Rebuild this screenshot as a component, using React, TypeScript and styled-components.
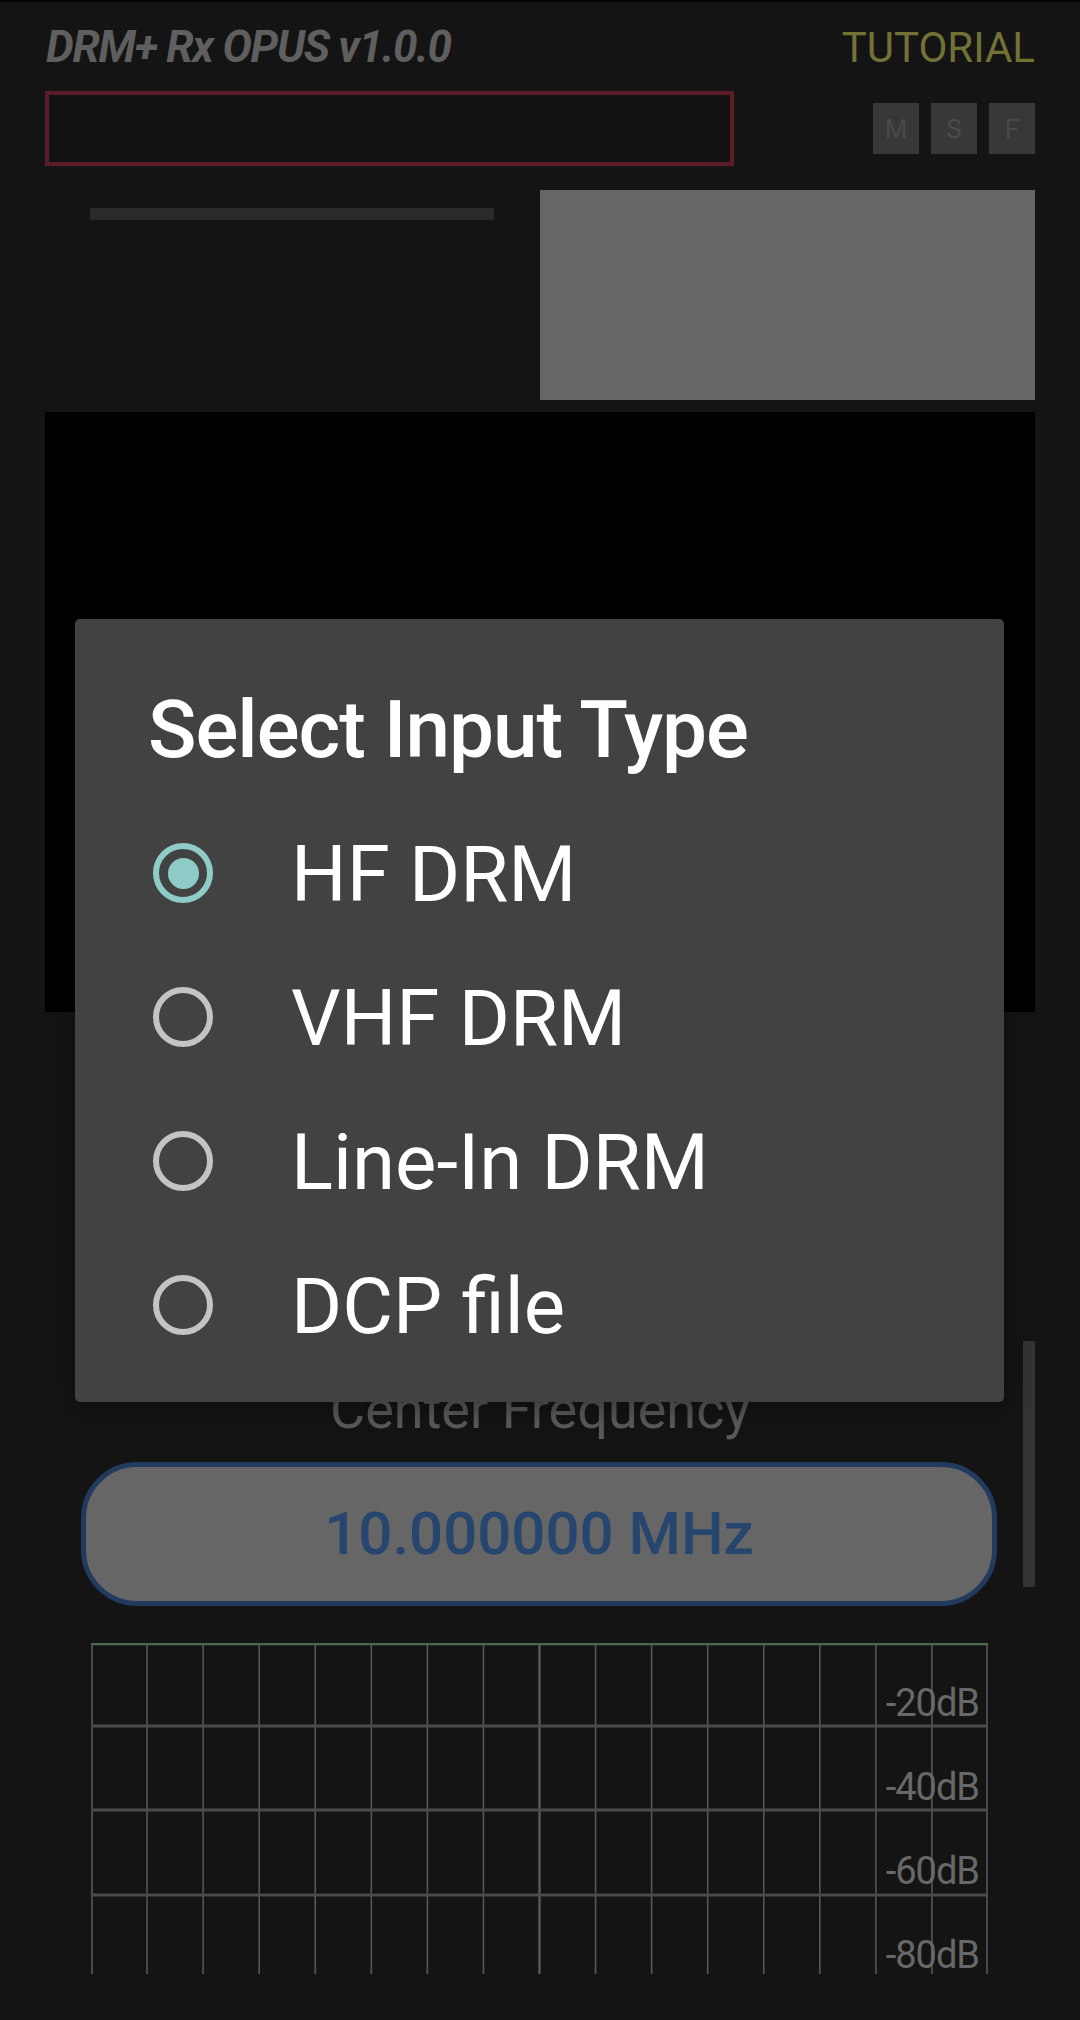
import React from "react";
import styled, { createGlobalStyle } from "styled-components";

const GlobalStyle = createGlobalStyle`
  html, body {
    margin: 0;
    padding: 0;
    background: #141414;
  }
  body {
    font-family: Roboto, "Noto Sans", "Liberation Sans", sans-serif;
  }
  * { box-sizing: border-box; }
`;

const Page = styled.div`
  position: relative;
  width: 1080px;
  height: 2020px;
  overflow: hidden;
  background: #141414;
  border-top: 2px solid #050505;
  padding: 0 45px;
  display: flex;
  flex-direction: column;
`;

const Header = styled.header`
  display: flex;
  justify-content: space-between;
  align-items: baseline;
  margin-top: 19px;
  height: 52px;
`;

const AppTitle = styled.h1`
  margin: 0 0 0 1px;
  font-size: 44px;
  line-height: 52px;
  font-weight: 700;
  font-style: italic;
  color: #5f5f5f;
  letter-spacing: -1.25px;
`;

const TutorialLink = styled.span`
  font-size: 42px;
  line-height: 52px;
  font-weight: 400;
  color: #727237;
`;

const StatusRow = styled.div`
  display: flex;
  justify-content: space-between;
  align-items: flex-start;
  margin-top: 18px;
`;

const StatusBox = styled.div`
  width: 689px;
  height: 75px;
  border: 4px solid #5b1b27;
  background: #121212;
`;

const ModeGroup = styled.div`
  display: flex;
  gap: 12px;
  margin-top: 12px;
`;

const ModeButton = styled.div`
  width: 46px;
  height: 51px;
  background: #383838;
  color: #4a4a4a;
  font-size: 26px;
  display: flex;
  align-items: center;
  justify-content: center;
`;

const InfoRow = styled.div`
  display: grid;
  grid-template-columns: 495px 495px;
  margin-top: 24px;
  height: 210px;
`;

const LevelColumn = styled.div`
  padding: 18px 0 0 45px;
`;

const LevelBar = styled.div`
  width: 404px;
  height: 12px;
  background: #2a2a2a;
`;

const Constellation = styled.div`
  background: #666666;
`;

const Scope = styled.div`
  margin-top: 12px;
  height: 600px;
  background: #000000;
`;

const FreqLabel = styled.div`
  margin-top: 366px;
  text-align: center;
  font-size: 54px;
  line-height: 64px;
  color: #5a5a5a;
`;

const FreqButton = styled.div`
  margin: 20px 0 0 36px;
  width: 916px;
  height: 144px;
  border: 5px solid #233a5f;
  border-radius: 56px;
  background: #666666;
  display: flex;
  align-items: center;
  justify-content: center;
  font-size: 60px;
  line-height: 72px;
  font-weight: 500;
  color: #26456f;
`;

const Spectrum = styled.svg`
  display: block;
  margin: 37px 0 0 46px;
  width: 897px;
  height: 331px;
`;

const ScrollIndicator = styled.div`
  position: absolute;
  right: 45px;
  top: 1339px;
  width: 12px;
  height: 246px;
  background: #333333;
`;

const Dialog = styled.div`
  position: absolute;
  left: 75px;
  top: 617px;
  width: 929px;
  height: 783px;
  background: #424242;
  border-radius: 5px;
  padding: 64px 73px 25px;
  box-shadow: 0 8px 24px rgba(0, 0, 0, 0.35);
`;

const DialogTitle = styled.h2`
  margin: 0 0 24px;
  font-size: 80px;
  line-height: 94px;
  font-weight: 500;
  color: #ffffff;
  letter-spacing: -1px;
`;

const OptionList = styled.div`
  display: flex;
  flex-direction: column;
`;

const OptionRow = styled.div`
  height: 144px;
  display: flex;
  align-items: center;
  padding-left: 5px;
`;

const Radio = styled.div<{ $checked: boolean }>`
  width: 60px;
  height: 60px;
  border-radius: 50%;
  border: 6px solid ${(p) => (p.$checked ? "#8fcbc7" : "#c4c4c4")};
  display: flex;
  align-items: center;
  justify-content: center;
  flex-shrink: 0;
  &::after {
    content: "";
    display: ${(p) => (p.$checked ? "block" : "none")};
    width: 31px;
    height: 31px;
    border-radius: 50%;
    background: #8fcbc7;
  }
`;

const OptionText = styled.span`
  margin-left: 78px;
  font-size: 78px;
  line-height: 92px;
  font-weight: 400;
  color: #ffffff;
  transform: translateY(2px);
`;

const options = [
  { label: "HF DRM", checked: true },
  { label: "VHF DRM", checked: false },
  { label: "Line-In DRM", checked: false },
  { label: "DCP file", checked: false },
];

const W = 897;
const H = 331;
const cols = 16;
const rowLines = [83, 167, 252];
const labels = [
  { y: 73, t: "-20dB" },
  { y: 157, t: "-40dB" },
  { y: 241, t: "-60dB" },
  { y: 325, t: "-80dB" },
];

function SpectrumGrid() {
  const xs = Array.from({ length: cols + 1 }, (_, i) => {
    const x = (i * W) / cols;
    return Math.min(Math.max(x, 1), W - 1);
  });
  return (
    <Spectrum viewBox={`0 0 ${W} ${H}`}>
      {xs.map((x, i) => (
        <line
          key={i}
          x1={x}
          x2={x}
          y1={0}
          y2={H}
          stroke="#575757"
          strokeWidth={i === cols / 2 ? 2.5 : 1.6}
        />
      ))}
      {rowLines.map((y) => (
        <line key={y} x1={0} x2={W} y1={y} y2={y} stroke="#4b4b4b" strokeWidth={3} />
      ))}
      <line x1={0} x2={W} y1={1} y2={1} stroke="#4d6a4d" strokeWidth={2.5} />
      {labels.map((l) => (
        <text
          key={l.t}
          x={888}
          y={l.y}
          textAnchor="end"
          fontSize={38}
          fill="#686868"
          fontFamily="Roboto, sans-serif"
          letterSpacing={-1}
        >
          {l.t}
        </text>
      ))}
    </Spectrum>
  );
}

export default function App() {
  return (
    <>
      <GlobalStyle />
      <Page>
        <Header>
          <AppTitle>DRM+ Rx OPUS v1.0.0</AppTitle>
          <TutorialLink>TUTORIAL</TutorialLink>
        </Header>
        <StatusRow>
          <StatusBox />
          <ModeGroup>
            <ModeButton>M</ModeButton>
            <ModeButton>S</ModeButton>
            <ModeButton>F</ModeButton>
          </ModeGroup>
        </StatusRow>
        <InfoRow>
          <LevelColumn>
            <LevelBar />
          </LevelColumn>
          <Constellation />
        </InfoRow>
        <Scope />
        <FreqLabel>Center Frequency</FreqLabel>
        <FreqButton>10.000000 MHz</FreqButton>
        <SpectrumGrid />
        <ScrollIndicator />
        <Dialog>
          <DialogTitle>Select Input Type</DialogTitle>
          <OptionList>
            {options.map((o) => (
              <OptionRow key={o.label}>
                <Radio $checked={o.checked} />
                <OptionText>{o.label}</OptionText>
              </OptionRow>
            ))}
          </OptionList>
        </Dialog>
      </Page>
    </>
  );
}
